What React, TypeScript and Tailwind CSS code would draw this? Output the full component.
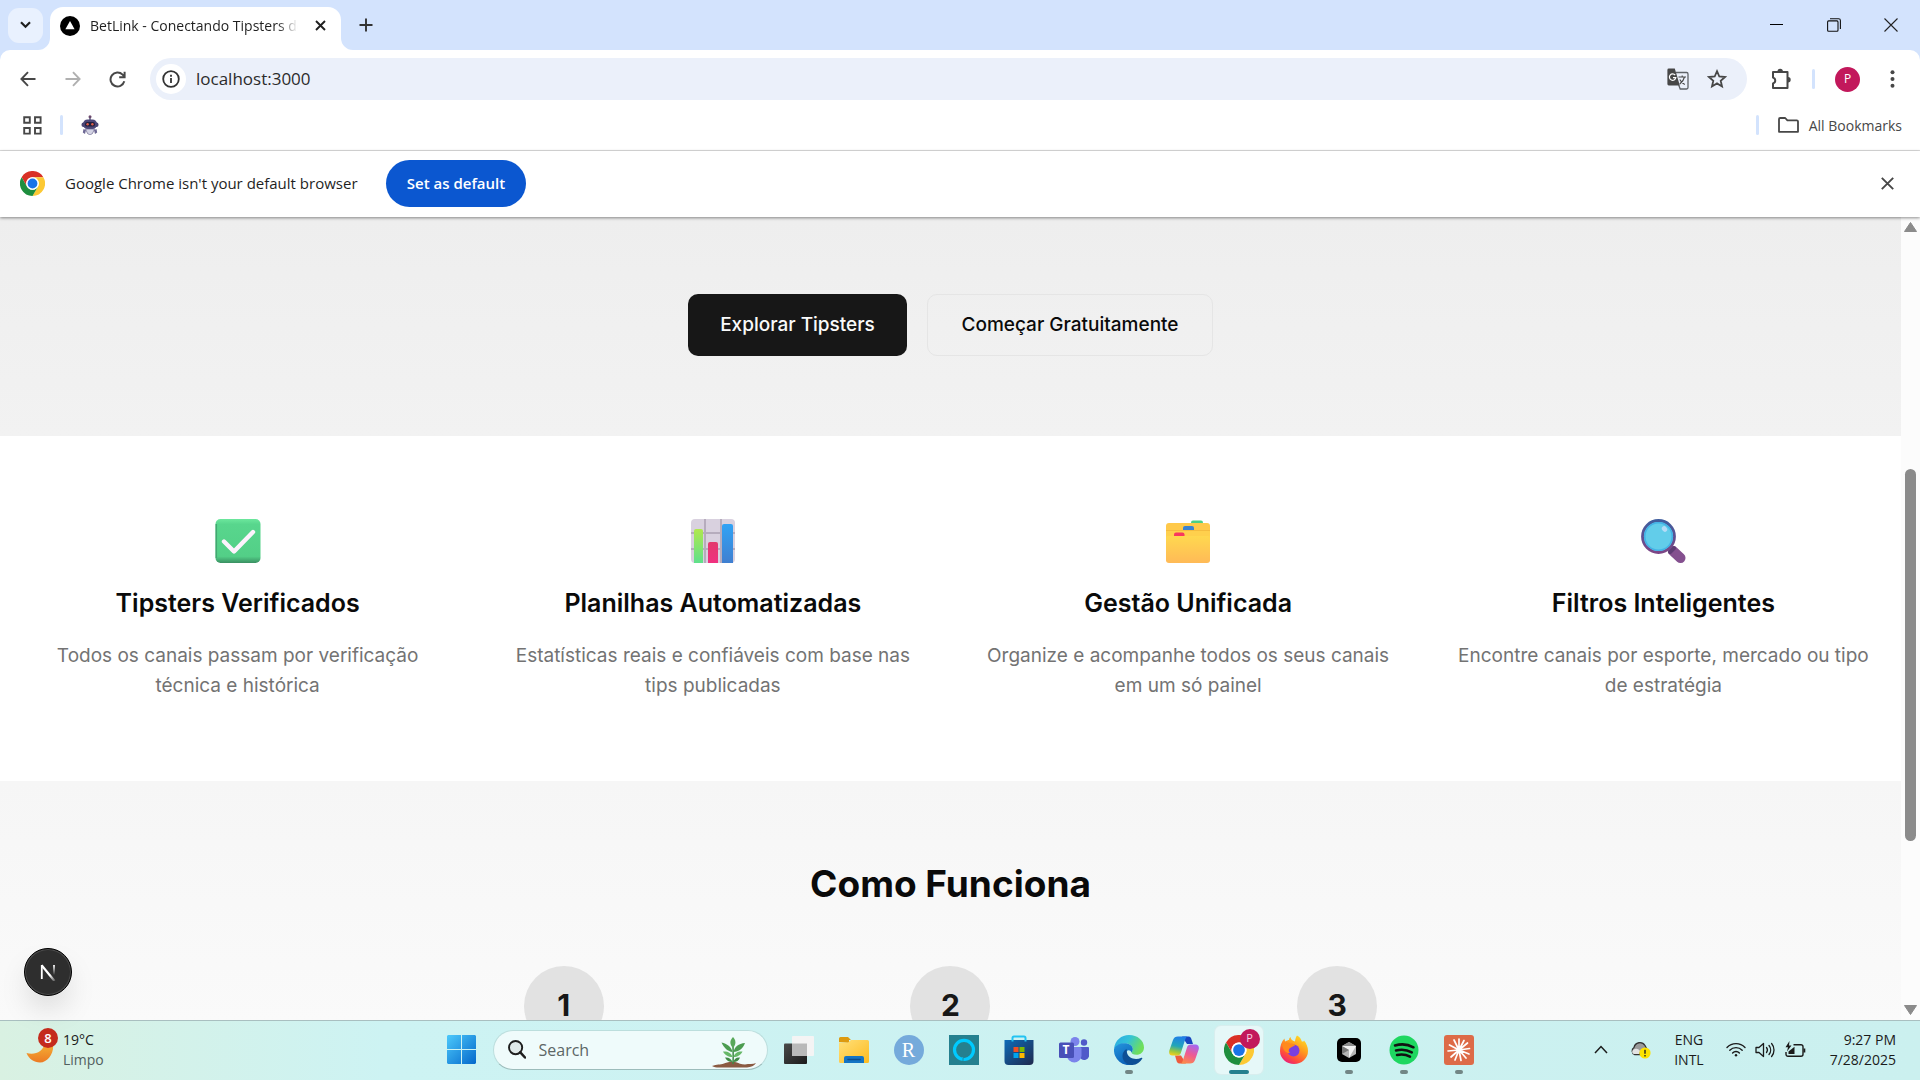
import type { ReactNode } from "react";

const UI = "font-['Open_Sans','Noto_Sans',sans-serif]";

/* ---------- shared brand drawings ---------- */

function ChromeLogo({ size }: { size: number }) {
  return (
    <svg width={size} height={size} viewBox="0 0 48 48" aria-hidden="true">
      <circle cx="24" cy="24" r="24" fill="#fff" />
      <path d="M3.2 12A24 24 0 0 1 44.8 12H24A12 12 0 0 0 13.6 30Z" fill="#d93025" />
      <path d="M44.8 12A24 24 0 0 1 24 48L34.4 30A12 12 0 0 0 24 12Z" fill="#fcc934" />
      <path d="M24 48A24 24 0 0 1 3.2 12L13.6 30A12 12 0 0 0 34.4 30Z" fill="#1e8e3e" />
      <circle cx="24" cy="24" r="12" fill="#fff" />
      <circle cx="24" cy="24" r="9.4" fill="#1a73e8" />
    </svg>
  );
}

/* ---------- browser chrome ---------- */

function TabStrip() {
  return (
    <div className={`flex h-[50px] shrink-0 bg-[#d3e3fd] ${UI}`}>
      <div className="flex w-[50px] items-center pl-2">
        <button aria-label="Search tabs" className="flex size-[35px] items-center justify-center rounded-[11px] bg-[#e9f1fe]">
          <svg width="11" height="8" viewBox="0 0 11 8" fill="none" stroke="#1f1f1f" strokeWidth="2.2">
            <path d="M1 1.2l4.5 4.5L10 1.2" />
          </svg>
        </button>
      </div>
      <div className="relative mt-[7px] flex w-[291px] items-center rounded-t-[13px] bg-white pl-[10px] pr-[15px] pb-[6px]">
        <svg className="absolute -left-3 bottom-0" width="12" height="12" viewBox="0 0 12 12">
          <path d="M12 0v12H0A12 12 0 0 0 12 0z" fill="#fff" />
        </svg>
        <svg className="absolute -right-3 bottom-0" width="12" height="12" viewBox="0 0 12 12">
          <path d="M0 0v12h12A12 12 0 0 1 0 0z" fill="#fff" />
        </svg>
        <svg width="20" height="20" viewBox="0 0 20 20" className="shrink-0">
          <circle cx="10" cy="10" r="10" fill="#000" />
          <path d="M10 5l4.6 8.2H5.4z" fill="#fff" />
        </svg>
        <span className="ml-[10px] flex-1 overflow-hidden whitespace-nowrap text-[14px] leading-5 text-[#1f1f1f] [mask-image:linear-gradient(to_right,#000_90%,transparent)]">
          BetLink - Conectando Tipsters de
        </span>
        <button aria-label="Close tab" className="ml-4 flex h-5 w-3 items-center justify-center">
          <svg width="11" height="11" viewBox="0 0 11 11" stroke="#1f1f1f" strokeWidth="1.9">
            <path d="M1 1l9 9M10 1l-9 9" />
          </svg>
        </button>
      </div>
      <button aria-label="New tab" className="ml-[18px] flex w-[14px] items-center justify-center">
        <svg width="14" height="14" viewBox="0 0 14 14" stroke="#333" strokeWidth="1.9">
          <path d="M7 0.5v13M0.5 7h13" />
        </svg>
      </button>
      <div className="ml-auto flex pr-px">
        <button aria-label="Minimize" className="flex w-[57px] items-center justify-center">
          <svg width="13" height="13" viewBox="0 0 13 13" stroke="#000"><path d="M0 5.5h13" /></svg>
        </button>
        <button aria-label="Restore" className="flex w-[57px] items-center justify-center">
          <svg width="14" height="14" viewBox="0 0 14 14" fill="none" stroke="#111" strokeWidth="1.1">
            <rect x="0.6" y="2.9" width="10.4" height="10.4" rx="1" />
            <path d="M3 0.7h8.6a1.8 1.8 0 0 1 1.8 1.8v8.4" />
          </svg>
        </button>
        <button aria-label="Close window" className="flex w-[57px] items-center justify-center">
          <svg width="14" height="14" viewBox="0 0 14 14" stroke="#222" strokeWidth="1.1"><path d="M0.5 0.5l13 13M13.5 0.5l-13 13" /></svg>
        </button>
      </div>
    </div>
  );
}

function Toolbar() {
  return (
    <div className={`flex h-[58px] shrink-0 items-center rounded-t-[10px] bg-white ${UI}`}>
      <div className="flex w-[150px] items-center pl-[5px]">
        <button aria-label="Back" className="flex w-[45px] justify-center">
          <svg width="16" height="16" viewBox="0 0 16 16" fill="none" stroke="#474747" strokeWidth="1.9"><path d="M15.5 8H1.5M8 1.2L1.4 8 8 14.8" /></svg>
        </button>
        <button aria-label="Forward" disabled className="flex w-[45px] justify-center">
          <svg width="16" height="16" viewBox="0 0 16 16" fill="none" stroke="#b0b0b0" strokeWidth="1.9"><path d="M0.5 8h14M8 1.2L14.6 8 8 14.8" /></svg>
        </button>
        <button aria-label="Reload" className="flex w-[45px] justify-center">
          <svg width="17" height="17" viewBox="0 0 17 17" fill="none" stroke="#474747" strokeWidth="2"><path d="M15.3 10.3A7 7 0 1 1 13.6 3.6L15.4 5.6M15.6 0.8v5.4h-5.4" /></svg>
        </button>
      </div>
      <div className="flex h-[42px] flex-1 items-center rounded-full bg-[#ebf0fa] pl-[6px] pr-5">
        <button aria-label="Site information" className="flex size-[30px] items-center justify-center rounded-full bg-white">
          <svg width="18" height="18" viewBox="0 0 18 18" fill="none" stroke="#333" strokeWidth="1.8">
            <circle cx="9" cy="9" r="7.8" />
            <path d="M9 8v5M9 4.8v1.9" />
          </svg>
        </button>
        <input aria-label="Address" defaultValue="localhost:3000" className="ml-[10px] min-w-0 flex-1 bg-transparent text-[17px] text-[#2b2b2b] outline-none" />
        <button aria-label="Translate this page" className="mr-[18px]">
          <svg width="22" height="22" viewBox="0 0 22 22">
            <path d="M9 4.5h10.6a1.4 1.4 0 0 1 1.4 1.4v13.7a1.4 1.4 0 0 1-1.4 1.4h-6.4l-1.5-4" fill="none" stroke="#5f6368" strokeWidth="1.3" />
            <path d="M1.8 0.5h6l5 17H1.8A1.4 1.4 0 0 1 .4 16.100V1.900A1.4 1.4 0 0 1 1.800.5z" fill="#474747" />
            <path d="M8.200 7.200A3.200 3.200 0 1 0 8.800 9.600H6" fill="none" stroke="#fff" strokeWidth="1.2" />
            <path d="M11.500 9h7.500M15.200 7.500V9M17.500 9c-.8 3.200-2.400 5.300-4.700 7M12.800 11.500c1.200 2.400 2.800 4 5 5" fill="none" stroke="#474747" strokeWidth="1.1" />
          </svg>
        </button>
        <button aria-label="Bookmark this tab">
          <svg width="20" height="20" viewBox="0 0 20 20" fill="none" stroke="#474747" strokeWidth="1.8">
            <path d="M10 2.2l2.300 5.300 5.700.500-4.300 3.800 1.300 5.600L10 14.400l-5 3 1.300-5.600L2 8l5.700-.500z" />
          </svg>
        </button>
      </div>
      <div className="flex w-[173px] items-center pl-[23px]">
        <button aria-label="Extensions">
          <svg width="22" height="22" viewBox="0 0 22 22" fill="none" stroke="#474747" strokeWidth="2">
            <path d="M3 4h14.500v16H3v-4.600a3 3 0 0 0 0-5.800z" strokeLinejoin="round" />
            <path d="M7.500 3.500a2.700 2.700 0 0 1 5.400 0zM18 9a2.700 2.700 0 0 1 0 5.400z" fill="#474747" stroke="none" />
          </svg>
        </button>
        <span className="ml-[20px] h-5 w-[3px] rounded-full bg-[#d3e3fd]" />
        <button aria-label="Profile" className="ml-5 flex size-[25px] items-center justify-center rounded-full bg-[#c2185b] text-[12px] text-white">P</button>
        <button aria-label="Menu" className="ml-[30px]">
          <svg width="5" height="18" viewBox="0 0 5 18" fill="#474747"><circle cx="2.500" cy="2.200" r="2" /><circle cx="2.500" cy="9" r="2" /><circle cx="2.500" cy="15.800" r="2" /></svg>
        </button>
      </div>
    </div>
  );
}

function BookmarksBar() {
  return (
    <div className={`flex h-[43px] shrink-0 items-center border-b border-[#dfdfdf] bg-white pb-2 pl-[23px] pr-[18px] ${UI}`}>
      <button aria-label="Apps">
        <svg width="19" height="19" viewBox="0 0 19 19" fill="none" stroke="#474747" strokeWidth="1.900">
          <path d="M1.200 1.200h5.600v5.600H1.200zM12 1.200h5.600v5.600H12zM1.200 12h5.600v5.600H1.200zM12 12h5.600v5.600H12z" />
        </svg>
      </button>
      <span className="ml-[18px] h-5 w-[3px] rounded-full bg-[#d3e3fd]" />
      <button aria-label="Robot bookmark" className="ml-[18px]">
        <svg width="18" height="20" viewBox="0 0 18 20">
          <path d="M9 2v3" stroke="#3b3561" strokeWidth="1.200" />
          <circle cx="9" cy="1.800" r="1.500" fill="#6b4a6e" />
          <rect x="0.500" y="7.500" width="17" height="4.500" rx="2" fill="#4a4470" />
          <rect x="2" y="4.500" width="14" height="9.500" rx="4.500" fill="#4b4677" />
          <rect x="4" y="7" width="10" height="4.600" rx="2.200" fill="#22203f" />
          <circle cx="6.600" cy="9.200" r="1.200" fill="#e0604c" />
          <circle cx="11.400" cy="9.200" r="1.200" fill="#e0604c" />
          <path d="M4.500 14h9l-2 4.500L9 20l-2.500-1.500z" fill="#d3d3e4" stroke="#5a5482" strokeWidth=".6" />
          <path d="M2.500 14l2.500 1-1 4-2.200-1.500zM15.500 14l-2.500 1 1 4 2.200-1.500z" fill="#6d6894" />
        </svg>
      </button>
      <span className="ml-auto h-5 w-[3px] rounded-full bg-[#d3e3fd]" />
      <button className="ml-[19px] flex items-center gap-[10px] text-[14px] text-[#474747]">
        <svg width="21" height="16" viewBox="0 0 21 16" fill="none" stroke="#474747" strokeWidth="1.800" strokeLinejoin="round">
          <path d="M1 14.800V2.200Q1 1 2.200 1h5l2.200 2.300h9.400Q20 3.300 20 4.500v10.300Z" />
        </svg>
        All Bookmarks
      </button>
    </div>
  );
}

function DefaultBrowserBar() {
  return (
    <div className={`relative z-10 flex h-[66px] shrink-0 items-center bg-white pb-[2px] pl-5 pr-[26px] shadow-[0_1px_3px_rgba(0,0,0,0.45)] ${UI}`}>
      <ChromeLogo size={25} />
      <span className="ml-5 min-w-[301px] text-[15px] text-[#1f1f1f]">Google Chrome isn't your default browser</span>
      <button className="ml-5 h-[47px] w-[140px] rounded-full bg-[#0b57d0] text-[15px] font-semibold text-white">Set as default</button>
      <button aria-label="Dismiss" className="ml-auto">
        <svg width="13" height="13" viewBox="0 0 13 13" stroke="#474747" strokeWidth="1.900"><path d="M0.800 0.800l11.400 11.400M12.200 0.800L0.800 12.200" /></svg>
      </button>
    </div>
  );
}

/* ---------- page ---------- */

const CheckIcon = (
  <svg width="46" height="46" viewBox="0 0 46 46">
    <defs>
      <linearGradient id="ck" x1="0" y1="0" x2="0" y2="1">
        <stop offset="0" stopColor="#6ce79d" /><stop offset=".12" stopColor="#58d68d" /><stop offset=".85" stopColor="#53cf87" /><stop offset="1" stopColor="#3a8f62" />
      </linearGradient>
    </defs>
    <rect x="0.500" y="1" width="45" height="44" rx="5" fill="url(#ck)" />
    <path d="M1.300 6v34" stroke="#43a671" strokeWidth="1.500" />
    <path d="M9 23.500l10 10L38 14" fill="none" stroke="#fdf3fd" strokeWidth="4.400" strokeLinecap="round" strokeLinejoin="round" />
  </svg>
);

const ChartIcon = (
  <svg width="46" height="46" viewBox="0 0 46 46">
    <defs>
      <linearGradient id="cg" x1="0" y1="0" x2="0" y2="1"><stop offset="0" stopColor="#b0e84e" /><stop offset="1" stopColor="#5fe08c" /></linearGradient>
      <linearGradient id="cr" x1="0" y1="0" x2="0" y2="1"><stop offset="0" stopColor="#e23a6c" /><stop offset="1" stopColor="#f03080" /></linearGradient>
      <linearGradient id="cb" x1="0" y1="0" x2="0" y2="1"><stop offset="0" stopColor="#31a3f5" /><stop offset="1" stopColor="#407fd0" /></linearGradient>
    </defs>
    <rect x="1" y="1" width="44" height="44" rx="4" fill="#d9d1df" />
    <path d="M1 15h44M1 31h44M15 1v44M31 1v44" stroke="#b6acbd" strokeWidth="2" />
    <path d="M4 45V13a2 2 0 0 1 2-2h5a2 2 0 0 1 2 2v32z" fill="url(#cg)" />
    <path d="M18 45V26a2 2 0 0 1 2-2h6a2 2 0 0 1 2 2v19z" fill="url(#cr)" />
    <path d="M32 45V8a2 2 0 0 1 2-2h7a2 2 0 0 1 2 2v37z" fill="url(#cb)" />
  </svg>
);

const FolderIcon = (
  <svg width="46" height="46" viewBox="0 0 46 46">
    <defs>
      <linearGradient id="fd" x1="0" y1="0" x2="0" y2="1"><stop offset="0" stopColor="#ffd84f" /><stop offset="1" stopColor="#ffba57" /></linearGradient>
    </defs>
    <path d="M26 7V4.500A2 2 0 0 1 28 2.500h8a2 2 0 0 1 2 2V7z" fill="#4ccf84" />
    <rect x="1" y="5" width="44" height="39" rx="3" fill="#ffc94a" />
    <path d="M18 13v-3a2 2 0 0 1 2-2h7a2 2 0 0 1 2 2v3z" fill="#3b82cf" />
    <path d="M1 14a2 2 0 0 1 2-2h40a2 2 0 0 1 2 2v10H1z" fill="#ffd04d" />
    <path d="M1 12.500h44" stroke="#f2b63c" strokeWidth=".8" />
    <path d="M9 19v-2.500a2 2 0 0 1 2-2h6.500a2 2 0 0 1 2 2V19z" fill="#f8375f" />
    <path d="M1 20a2 2 0 0 1 2-2h40a2 2 0 0 1 2 2v22a3 3 0 0 1-3 3H4a3 3 0 0 1-3-3z" fill="url(#fd)" />
  </svg>
);

const LensIcon = (
  <svg width="46" height="46" viewBox="0 0 46 46">
    <defs>
      <linearGradient id="ln" x1="0" y1="0" x2="0" y2="1"><stop offset="0" stopColor="#3f5d9e" /><stop offset="1" stopColor="#7d4686" /></linearGradient>
    </defs>
    <path d="M33 33l7.500 7" stroke="#84508f" strokeWidth="10" strokeLinecap="round" />
    <path d="M30 34l4-4" stroke="#5f3c74" strokeWidth="4" strokeLinecap="round" />
    <circle cx="18.500" cy="18.500" r="16" fill="#62cdea" stroke="url(#ln)" strokeWidth="2.800" />
    <circle cx="18.500" cy="18.500" r="13.800" fill="none" stroke="#43b3e6" strokeWidth="1.600" />
    <ellipse cx="24.500" cy="11" rx="2.400" ry="3" fill="#b5dcf7" transform="rotate(-40 24.500 11)" />
  </svg>
);

const features: { icon: ReactNode; title: string; text: string }[] = [
  { icon: CheckIcon, title: "Tipsters Verificados", text: "Todos os canais passam por verificação técnica e histórica" },
  { icon: ChartIcon, title: "Planilhas Automatizadas", text: "Estatísticas reais e confiáveis com base nas tips publicadas" },
  { icon: FolderIcon, title: "Gestão Unificada", text: "Organize e acompanhe todos os seus canais em um só painel" },
  { icon: LensIcon, title: "Filtros Inteligentes", text: "Encontre canais por esporte, mercado ou tipo de estratégia" },
];

function Page() {
  return (
    <main className="min-w-0 flex-1 overflow-hidden bg-white font-['Inter',sans-serif] text-[#0a0a0a]">
      <section className="flex justify-center gap-5 bg-linear-to-b from-[#eeeeee] to-[#f2f2f2] pt-[77px] pb-20">
        <a href="#tipsters" className="flex h-[62px] w-[219px] items-center justify-center rounded-[10px] bg-[#171717] text-[19px] font-medium text-[#fafafa]">
          Explorar Tipsters
        </a>
        <a href="#comecar" className="flex h-[62px] w-[286px] items-center justify-center rounded-[10px] border border-[#e5e5e5] text-[19px] font-medium">
          Começar Gratuitamente
        </a>
      </section>
      <section className="grid grid-cols-4 gap-[50px] px-[25px] py-20">
        {features.map((f) => (
          <article key={f.title} className="flex flex-col items-center text-center">
            <div className="flex h-[50px] items-center">{f.icon}</div>
            <h3 className="mt-5 text-[25px] leading-[35px] font-semibold">{f.title}</h3>
            <p className="mt-5 text-[19px] leading-[30px] text-[#737373]">{f.text}</p>
          </article>
        ))}
      </section>
      <section className="bg-linear-to-b from-[#f6f6f6] to-[#fdfdfd] pt-20 pb-40">
        <h2 className="text-center text-[37px] leading-[45px] font-bold">Como Funciona</h2>
        <ol className="mx-auto mt-[60px] grid max-w-[1120px] grid-cols-3 gap-10">
          {["1", "2", "3"].map((n) => (
            <li key={n} className="mx-auto flex size-20 items-center justify-center rounded-full bg-[#e2e2e2] pb-[2px] text-[30px] font-bold text-[#171717]">
              {n}
            </li>
          ))}
        </ol>
      </section>
    </main>
  );
}

function PageScrollbar() {
  return (
    <div className="flex w-[19px] shrink-0 flex-col items-center bg-[#fcfcfc] py-[5px]">
      <svg width="13" height="10" viewBox="0 0 13 10"><path d="M6.500 0.500L12.500 9.500H0.500z" fill="#8b8b8b" stroke="#8b8b8b" strokeLinejoin="round" /></svg>
      <div className="flex w-[11px] flex-1 flex-col">
        <div className="grow-[237]" />
        <div className="grow-[372] rounded-full bg-[#8b8b8b]" />
        <div className="grow-[164]" />
      </div>
      <svg width="13" height="10" viewBox="0 0 13 10"><path d="M6.500 9.500L12.500 0.500H0.500z" fill="#8b8b8b" stroke="#8b8b8b" strokeLinejoin="round" /></svg>
    </div>
  );
}

function DevBadge() {
  return (
    <button aria-label="Next.js dev tools" className="absolute bottom-6 left-6 flex size-12 items-center justify-center rounded-full border border-black bg-[#2e2e2e] shadow-[inset_0_0_0_1px_#4d4d4d,0_16px_32px_-8px_rgba(0,0,0,0.22)]">
      <svg width="18" height="18" viewBox="0 0 18 18" fill="none">
        <defs>
          <linearGradient id="nx1" x1="11" y1="12" x2="16" y2="18" gradientUnits="userSpaceOnUse"><stop stopColor="#fff" /><stop offset="1" stopColor="#fff" stopOpacity=".2" /></linearGradient>
          <linearGradient id="nx2" x1="15" y1="2" x2="15" y2="12" gradientUnits="userSpaceOnUse"><stop stopColor="#fff" /><stop offset="1" stopColor="#fff" stopOpacity="0" /></linearGradient>
        </defs>
        <path d="M2.800 16V2" stroke="#fff" strokeWidth="1.800" />
        <path d="M2.600 2.300L15.500 18" stroke="url(#nx1)" strokeWidth="2.200" />
        <path d="M15 2v10" stroke="url(#nx2)" strokeWidth="1.800" />
      </svg>
    </button>
  );
}

/* ---------- taskbar ---------- */

const apps: { name: string; icon: ReactNode; state?: "open" | "active" }[] = [
  {
    name: "Task view",
    icon: (
      <svg width="30" height="30" viewBox="0 0 30 30">
        <defs><linearGradient id="tv" x1="0" y1="0" x2="1" y2="1"><stop stopColor="#4a4a4a" /><stop offset="1" stopColor="#1b1b1b" /></linearGradient></defs>
        <rect x="0" y="8.500" width="23" height="20.500" rx="1" fill="url(#tv)" />
        <rect x="8" y="1" width="22" height="20" rx="1" fill="#f4f4f4" />
        <rect x="8" y="8.500" width="15" height="12.500" fill="#b9b9b9" />
      </svg>
    ),
  },
  {
    name: "File Explorer",
    icon: (
      <svg width="30" height="30" viewBox="0 0 30 30">
        <defs><linearGradient id="fe" x1="0" y1="0" x2="1" y2="1"><stop stopColor="#ffe07a" /><stop offset="1" stopColor="#fdbb1f" /></linearGradient></defs>
        <path d="M0 7V3.500A1.500 1.500 0 0 1 1.500 2H9l3 3h-2v3z" fill="#dd9a10" />
        <path d="M0 7.500h9l3-2.500h16.500A1.500 1.500 0 0 1 30 6.500v20a1.500 1.500 0 0 1-1.500 1.500h-27A1.500 1.500 0 0 1 0 26.500z" fill="url(#fe)" />
        <path d="M5 28v-5a2 2 0 0 1 2-2h16a2 2 0 0 1 2 2v5z" fill="#1474c4" />
        <path d="M9 24.500h12" stroke="#0b4c8c" strokeWidth="1.500" strokeLinecap="round" />
      </svg>
    ),
  },
  {
    name: "RStudio",
    icon: (
      <span className="flex size-[30px] items-center justify-center rounded-full bg-[#75aadb] font-['Liberation_Serif',serif] text-[20px] text-white">R</span>
    ),
  },
  {
    name: "Alexa",
    icon: (
      <svg width="30" height="30" viewBox="0 0 30 30">
        <rect width="30" height="30" fill="#25808f" />
        <circle cx="15" cy="14.800" r="9.500" fill="none" stroke="#00caff" strokeWidth="3.200" />
        <path d="M13 22.500l1 3.700 3-3z" fill="#00caff" />
        <path d="M14 26.200v-3.400l2.600-.6" fill="none" stroke="#25808f" strokeWidth=".8" />
      </svg>
    ),
  },
  {
    name: "Microsoft Store",
    icon: (
      <svg width="30" height="30" viewBox="0 0 30 30">
        <defs><linearGradient id="st" x1="0" y1="0" x2="1" y2="1"><stop stopColor="#0e6bb8" /><stop offset="1" stopColor="#20294d" /></linearGradient></defs>
        <path d="M.5 5h29v21a4 4 0 0 1-4 4h-21a4 4 0 0 1-4-4z" fill="url(#st)" />
        <path d="M8.500 6.500V3A1.500 1.500 0 0 1 10 1.500h10A1.500 1.500 0 0 1 21.500 3v3.500" fill="none" stroke="#23c3f2" strokeWidth="2" />
        <path d="M9.500 12h5v5h-5z" fill="#f25022" /><path d="M15.500 12h5v5h-5z" fill="#7fba00" />
        <path d="M9.500 18h5v5h-5z" fill="#00a4ef" /><path d="M15.500 18h5v5h-5z" fill="#ffb900" />
      </svg>
    ),
  },
  {
    name: "Teams",
    icon: (
      <span className="relative block size-[30px]">
        <svg width="30" height="30" viewBox="0 0 30 30">
          <circle cx="25" cy="7.500" r="3.200" fill="#5059c9" />
          <path d="M20 12h9a1.200 1.200 0 0 1 1.200 1.200V20a5 5 0 0 1-9 3z" fill="#5059c9" />
          <circle cx="16" cy="6.500" r="4.500" fill="#7b83eb" />
          <path d="M9.500 12H21a1.500 1.500 0 0 1 1.500 1.500V21a7.300 7.300 0 0 1-14.500 0z" fill="#7b83eb" />
          <rect x="0" y="7.500" width="15" height="15.500" rx="1.500" fill="#4850b8" />
        </svg>
        <span className="absolute left-0 top-[7px] w-[15px] text-center font-['Open_Sans',sans-serif] text-[12px] leading-4 font-bold text-white">T</span>
      </span>
    ),
  },
  {
    name: "Edge",
    state: "open",
    icon: (
      <svg width="30" height="30" viewBox="0 0 30 30">
        <defs>
          <linearGradient id="e1" x1="0" y1="0" x2="1" y2=".4"><stop stopColor="#2aa7e4" /><stop offset=".5" stopColor="#33c2d8" /><stop offset="1" stopColor="#6fdf5b" /></linearGradient>
          <linearGradient id="e2" x1="0" y1="0" x2=".5" y2="1"><stop stopColor="#2596de" /><stop offset="1" stopColor="#0b62b8" /></linearGradient>
        </defs>
        <path d="M0 14C1 5 7.500 0 15 0c8.500 0 15 5.500 15 12.500 0 4.500-3.500 7.300-7.500 7.300-3.500 0-5-1.200-5-2.300 0-.8 1.300-1.500 1.300-3.500C18.800 10.500 15 8.500 11 8.500 6 8.500 2 11 0 14z" fill="url(#e1)" />
        <path d="M0 14C2 10 6 8.300 10.500 8.300c4.800 0 8.300 2.700 8.300 5.700 0 1.800-1 2.800-1.300 3.500-1-2.800-5-3.500-5.700 1-.6 4 1.700 9.300 7.200 11A15 15 0 0 1 0 14z" fill="url(#e2)" />
        <path d="M12.500 14c-2.500 1.500-4 4-4 7 0 4.500 3.500 8.300 8.500 9 5 .3 9-2.500 11.300-6.500.3-.6-.3-1-.8-.7-6.500 3-13.500.2-14.500-5-.3-1.500 0-2.700-.5-3.800z" fill="#0d4f96" />
      </svg>
    ),
  },
  {
    name: "Copilot",
    icon: (
      <svg width="30" height="30" viewBox="0 0 30 30">
        <defs>
          <linearGradient id="c1" x1=".5" y1="0" x2=".3" y2="1"><stop stopColor="#1f7fe8" /><stop offset=".5" stopColor="#22a6b8" /><stop offset=".8" stopColor="#9bc83d" /><stop offset="1" stopColor="#f3cf1d" /></linearGradient>
          <linearGradient id="c2" x1=".7" y1="0" x2=".3" y2="1"><stop stopColor="#a566f0" /><stop offset=".5" stopColor="#ee5a93" /><stop offset="1" stopColor="#fb8a4c" /></linearGradient>
        </defs>
        <path d="M13 1.500h6.500c2 0 2.600 1.500 3.200 3.500L24 9h-6z" fill="#1746c0" />
        <path d="M17 28.500h-6.500c-2 0-2.600-1.500-3.200-3.500L6 20.500h6z" fill="#ee5b3d" />
        <path d="M9 1.500h9.500c-1.500.5-2 2-2.500 3.500l-4 12.500c-.7 2.200-1.700 3-4 3H3.500C.500 20.500-.5 18 .5 15L4 5c.9-2.500 2.500-3.500 5-3.500z" fill="url(#c1)" />
        <path d="M21 28.500h-9.500c1.500-.5 2-2 2.500-3.500l4-12.500c.7-2.200 1.700-3 4-3h4.500c3 0 4 2.500 3 5.500L26 25c-.9 2.500-2.500 3.500-5 3.500z" fill="url(#c2)" />
      </svg>
    ),
  },
  {
    name: "Chrome",
    state: "active",
    icon: (
      <span className="relative block">
        <ChromeLogo size={30} />
        <span className="absolute -right-[6px] -top-[6px] flex size-5 items-center justify-center rounded-full bg-[#c2185b] text-[11px] text-[#f8cfe0]">P</span>
      </span>
    ),
  },
  {
    name: "Firefox",
    icon: (
      <svg width="30" height="30" viewBox="0 0 30 30">
        <defs>
          <linearGradient id="f1" x1=".8" y1="0" x2=".2" y2="1"><stop stopColor="#ffe226" /><stop offset=".4" stopColor="#ff9a1f" /><stop offset=".75" stopColor="#ff4a3d" /><stop offset="1" stopColor="#e31587" /></linearGradient>
        </defs>
        <path d="M18 .5c3 1.500 4.300 4 4.800 6 1.200.3 2.200 0 2.200-1 2.500 3 4 6.500 4 10.500A14 13 0 0 1 1 16C1 11 2.500 6.500 5.500 3.500c0 1.500.5 2.500 1 3C8 5.500 9 5 10 5c.2-2 .8-2.500 1.500-3 .2 2 1.500 3.500 4.500 4.500.3-2.500.8-4.500 2-6z" fill="url(#f1)" />
        <circle cx="14.500" cy="15.500" r="6" fill="#7a3fe0" />
        <path d="M3 9.500c3-2.500 6-2.500 8.500-1 2 0 4 .5 4.500 2-1.500.8-3 1-4 2-2.500 1-3 3.500-1 5.500-4 .5-7-3-8-8.500z" fill="#ff8a1c" />
      </svg>
    ),
  },
  {
    name: "Cursor",
    state: "open",
    icon: (
      <svg width="30" height="30" viewBox="0 0 30 30">
        <rect x="3" y="3" width="24" height="24" rx="5" fill="#000" />
        <path d="M15 7l7 4v8l-7 4-7-4v-8z" fill="#b5b5b5" />
        <path d="M8 11h14l-7 12v-8z" fill="#f2f2f2" /><path d="M8 11l7-4 7 4z" fill="#8b8b8b" /><path d="M8 11v8l7-4z" fill="#777" />
      </svg>
    ),
  },
  {
    name: "Spotify",
    state: "open",
    icon: (
      <svg width="30" height="30" viewBox="0 0 30 30">
        <circle cx="15" cy="15" r="14.500" fill="#1ed760" />
        <path d="M6 10.500c6-1.800 13-1.200 18.500 1.800M7 15.500c5-1.400 11-.8 15.800 1.900M8 20c4.500-1.100 9-.6 13 1.700" fill="none" stroke="#111" strokeWidth="2.500" strokeLinecap="round" />
      </svg>
    ),
  },
  {
    name: "Claude",
    state: "open",
    icon: (
      <svg width="30" height="30" viewBox="0 0 30 30">
        <rect width="30" height="30" rx="3" fill="#dd6b48" />
        <path d="M15 15L15 4M15 15l5-9.500M15 15l8.500-7M15 15l10.500-1.500M15 15l10 4M15 15l7 8M15 15l2 10.500M15 15l-4 10M15 15l-8 7M15 15l-11 1M15 15L5.500 10M15 15L10 5" stroke="#fff" strokeWidth="1.700" strokeLinecap="round" />
      </svg>
    ),
  },
];

function Taskbar() {
  return (
    <footer className={`grid h-[60px] shrink-0 grid-cols-[1fr_auto_1fr] items-center border-t border-[#a9bfc0] bg-linear-to-r from-[#d9f1e2] via-[#cdf3f3] via-20% to-[#cbf0ef] pb-[2px] ${UI}`}>
      <button aria-label="Weather" className="flex items-center pl-[26px] text-left text-[14px] leading-5">
        <span className="relative block h-9 w-[33px]">
          <svg className="absolute left-0 top-[9px]" width="28" height="24" viewBox="0 0 28 24">
            <defs><linearGradient id="mn" x1="0" y1="0" x2="0" y2="1"><stop stopColor="#f5b336" /><stop offset="1" stopColor="#ec7a24" /></linearGradient></defs>
            <path d="M0.500 12c8 2.500 17-1 18-10h8.500C28.500 12 22 21 14 21.500 8 21.500 3 18 .5 12z" fill="url(#mn)" />
          </svg>
          <span className="absolute left-3 -top-1 flex size-5 items-center justify-center rounded-full bg-[#c42b1c] text-[13px] font-semibold text-white">8</span>
        </span>
        <span className="ml-1">
          <span className="block text-[#1b1b1b]">19°C</span>
          <span className="block text-[#51605f]">Limpo</span>
        </span>
      </button>

      <div className="flex items-center gap-[7px]">
        <button aria-label="Start" className="flex size-12 items-center justify-center">
          <svg width="29" height="29" viewBox="0 0 29 29">
            <defs><linearGradient id="wn" x1="0" y1="0" x2="29" y2="29" gradientUnits="userSpaceOnUse"><stop stopColor="#4cc9fb" /><stop offset="1" stopColor="#0468cb" /></linearGradient></defs>
            <path d="M1 0h13v14H0V1zM15 0h13l1 1v13H15zM0 15h14v14H1l-1-1zM15 15h14v13l-1 1H15z" fill="url(#wn)" />
          </svg>
        </button>
        <label className="relative flex h-10 w-[275px] items-center rounded-full border border-b-[#9cbcbb] border-[#bcdedd] bg-[#effbfb] pl-[14px]">
          <svg width="18" height="19" viewBox="0 0 18 19" fill="none" stroke="#1e1e1e">
            <circle cx="7.600" cy="7.600" r="6.600" strokeWidth="1.900" fill="#dfe9e9" />
            <path d="M12.300 12.300l4.700 5.200" strokeWidth="2.500" strokeLinecap="round" />
          </svg>
          <input type="text" placeholder="Search" aria-label="Search" className="ml-[13px] w-[140px] bg-transparent text-[16px] outline-none placeholder:text-[#5c6666]" />
          <svg className="absolute bottom-px right-[10px]" width="46" height="32" viewBox="0 0 46 32">
            <path d="M1 30c5-2 8-1 12-2.500 4-1.500 7-2 11-1.500 4 1 6 2.500 10 2.500 4-1 8 0 11-1.500-2 3-5 4-9 4.500H8c-3 0-5-.5-7-1.500z" fill="#8a5a42" />
            <path d="M22 28c.5-8 0-14 0-20" stroke="#3f8a45" strokeWidth="1.500" fill="none" />
            <path d="M22 12c-4-4-3-8 0-11 3 3 3.500 7 0 11z" fill="#58a85a" />
            <path d="M21.500 16C17 15.500 13 12 10.500 6.500 16 8 20.500 10.500 21.500 16zM22.500 16c1-5 5-8.500 11.500-9-2 5.500-6 8.500-11.500 9z" fill="#4b9c50" />
            <path d="M21.500 21c-4 0-8-2-9.500-5.500 4.500-.5 8.500 1.500 9.500 5.500zM22.500 21c1-4 4.500-6 9-5.500-1.500 3.500-5 5.500-9 5.500z" fill="#67b868" />
            <path d="M21.500 26c-3.500 0-6-1.500-7.500-4.500 3.500-.5 6.500 1.500 7.500 4.500zM22.500 26c.5-3 3-5 6.500-4.500-1 3-3.500 4.500-6.500 4.500z" fill="#3f8a45" />
          </svg>
        </label>
        {apps.map((a) => (
          <button
            key={a.name}
            aria-label={a.name}
            className={
              a.state === "active"
                ? "relative flex size-12 items-center justify-center rounded-md bg-[#e6f8f8] shadow-[0_0_0_1px_#d8eeee]"
                : "relative flex size-12 items-center justify-center"
            }
          >
            {a.icon}
            {a.state === "active" && <span className="absolute bottom-0 left-[14px] h-1 w-5 rounded-full bg-[#25808f]" />}
            {a.state === "open" && <span className="absolute bottom-0 left-5 h-1 w-2 rounded-full bg-[#728685]" />}
          </button>
        ))}
      </div>

      <div className="flex items-center justify-end pr-6 text-[14px] leading-5 text-[#1b1b1b]">
        <button aria-label="Show hidden icons">
          <svg width="14" height="9" viewBox="0 0 14 9" fill="none" stroke="#1b1b1b" strokeWidth="1.500"><path d="M1 8l6-6.500L13 8" /></svg>
        </button>
        <button aria-label="OneDrive" className="ml-[22px]">
          <svg width="21" height="18" viewBox="0 0 21 18">
            <path d="M4.500 13.500A4 4 0 0 1 4 6.500 6 6 0 0 1 15 4.500l1.500 3-4 6z" fill="#9a9a9a" stroke="#333" strokeWidth="1.300" />
            <path d="M3 9c3-2 5-1.500 7 1l-1 3H4.500C2 13 1.500 10.500 3 9z" fill="#e3e3e3" />
            <circle cx="15" cy="12" r="5.600" fill="#fde300" />
            <path d="M15 8.800v4M15 14v1.400" stroke="#222" strokeWidth="1.400" />
          </svg>
        </button>
        <button className="ml-[23px] text-center">
          <span className="block">ENG</span>
          <span className="block">INTL</span>
        </button>
        <button aria-label="Network, volume and battery" className="ml-[22px] flex items-center gap-[9px]">
          <svg width="20" height="15" viewBox="0 0 20 15" fill="none" stroke="#1b1b1b" strokeWidth="1.400" strokeLinecap="round">
            <path d="M1 5.500a12.500 12.500 0 0 1 18 0M3.800 8.300a8.600 8.600 0 0 1 12.400 0M6.600 10.900a4.800 4.800 0 0 1 6.800 0" />
            <circle cx="10" cy="13.200" r="1.200" fill="#1b1b1b" stroke="none" />
          </svg>
          <svg width="21" height="16" viewBox="0 0 21 16" fill="none" stroke="#1b1b1b" strokeWidth="1.300" strokeLinecap="round" strokeLinejoin="round">
            <path d="M1 5.500h3l4.500-4v13l-4.500-4H1zM11.500 5.500a4 4 0 0 1 0 5M14 3.500a7 7 0 0 1 0 9M16.600 1.500a10 10 0 0 1 0 13" />
          </svg>
          <svg width="21" height="17" viewBox="0 0 21 17" fill="none" stroke="#1b1b1b" strokeWidth="1.400">
            <path d="M8.500 3.700H16A2 2 0 0 1 18 5.700v7.600a2 2 0 0 1-2 2H3a2 2 0 0 1-2-2V11" />
            <path d="M19.400 7.500v4" strokeWidth="1.800" />
            <path d="M3.500 13V10.500L9.500 5.800V13z" fill="#1b1b1b" stroke="none" />
            <path d="M4.500 0L0.500 6.200H3l-1 4.300 4.500-6H4z" fill="#1b1b1b" stroke="none" />
          </svg>
        </button>
        <button className="ml-6 text-right">
          <span className="block">9:27 PM</span>
          <span className="block">7/28/2025</span>
        </button>
      </div>
    </footer>
  );
}

export default function App() {
  return (
    <div className="flex h-screen flex-col overflow-hidden bg-[#d3e3fd]">
      <TabStrip />
      <Toolbar />
      <BookmarksBar />
      <DefaultBrowserBar />
      <div className="relative flex min-h-0 flex-1">
        <Page />
        <PageScrollbar />
        <DevBadge />
      </div>
      <Taskbar />
    </div>
  );
}
